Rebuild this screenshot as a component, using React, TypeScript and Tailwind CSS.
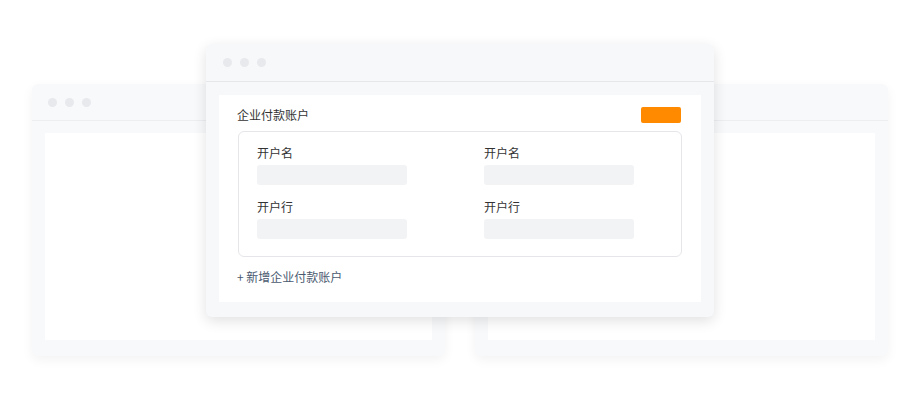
import React from 'react';

const font = { fontFamily: '"Noto Sans CJK SC", "Noto Sans", sans-serif' };

const Dots: React.FC = () => (
  <div className="flex gap-2">
    <span className="w-[9px] h-[9px] rounded-full bg-[#e8e9ec]" />
    <span className="w-[9px] h-[9px] rounded-full bg-[#e8e9ec]" />
    <span className="w-[9px] h-[9px] rounded-full bg-[#e8e9ec]" />
  </div>
);

const BackWindow: React.FC<{ className: string }> = ({ className }) => (
  <div className={`absolute w-[413px] h-[272px] rounded-md bg-[#f8f9fb] shadow-[0_4px_12px_rgba(0,0,0,0.05)] flex flex-col ${className}`}>
    <div className="h-[37px] flex items-center px-[16px] border-b border-[#edeef1] shrink-0">
      <Dots />
    </div>
    <div className="flex-1 mx-[13px] mt-[12px] mb-[16px] bg-white" />
  </div>
);

const Field: React.FC<{ label: string }> = ({ label }) => (
  <div className="flex flex-col">
    <span className="text-[12px] leading-[16px] text-[#333]">{label}</span>
    <div className="mt-[4px] w-[150px] h-[20px] rounded-[3px] bg-[#f2f3f5]" />
  </div>
);

export default function App() {
  return (
    <div className="relative w-[920px] h-[400px] bg-white overflow-hidden" style={font}>
      <BackWindow className="left-[32px] top-[84px]" />
      <BackWindow className="left-[475px] top-[84px]" />

      <div className="absolute left-[206px] top-[44px] w-[508px] h-[273px] rounded-md bg-[#f7f8fa] shadow-[0_4px_14px_rgba(0,0,0,0.12)] flex flex-col">
        <div className="h-[38px] flex items-center px-[17px] border-b border-[#e6e7ea] shrink-0">
          <Dots />
        </div>
        <div className="flex-1 mx-[13px] mt-[13px] mb-[15px] bg-white px-[18px] pt-[12px] flex flex-col">
          <div className="flex items-center justify-between h-[16px] pr-[2px]">
            <span className="text-[12px] leading-[16px] text-[#333]">企业付款账户</span>
            <span className="w-[40px] h-[16px] rounded-[2px] bg-[#ff8a00]" />
          </div>
          <div className="mt-[8px] mx-[1px] h-[126px] border border-[#e5e6e9] rounded-md px-[18px] pt-[13px] grid grid-cols-[150px_150px] gap-x-[77px] gap-y-[14px] content-start">
            <Field label="开户名" />
            <Field label="开户名" />
            <Field label="开户行" />
            <Field label="开户行" />
          </div>
          <span className="mt-[12px] text-[12px] leading-[16px] text-[#4a5a70]">+ 新增企业付款账户</span>
        </div>
      </div>
    </div>
  );
}
